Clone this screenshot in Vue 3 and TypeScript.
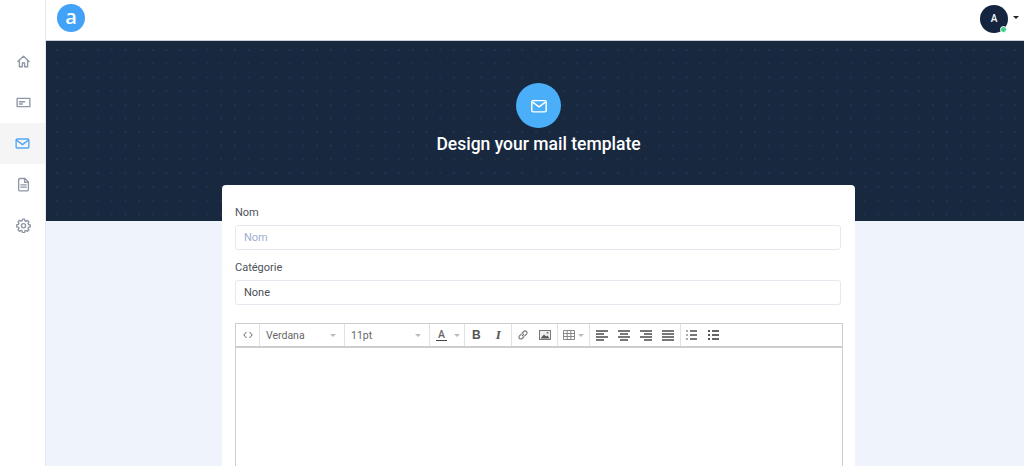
<script setup lang="ts">
const navItems = [
  { id: 'home', paths: ['M2.500 10 10 3l7.500 7', 'M4.500 8.500V17h4v-5h3v5h4V8.500'] },
  { id: 'card', paths: ['M1.500 4.500h17v11h-17z', 'M4.500 9h7', 'M4.500 12h4'] },
  { id: 'mail', paths: ['M3 4h14a1.500 1.500 0 0 1 1.500 1.500v9A1.500 1.500 0 0 1 17 16H3a1.500 1.500 0 0 1-1.500-1.500v-9A1.500 1.500 0 0 1 3 4z', 'M2 5.500 10 11.500l8-6'] },
  { id: 'doc', paths: ['M5 2h7l4.500 4.500V17a1.500 1.500 0 0 1-1.500 1.500H5A1.500 1.500 0 0 1 3.500 17V3.500A1.500 1.500 0 0 1 5 2z', 'M11.500 2.500V7h4.500', 'M6.500 10.500h7', 'M6.500 13.500h7'] },
  { id: 'gear', paths: ['M8.600 1.500h2.800l.4 2.300 1.500.7 2-1.300 2 2-1.300 2 .7 1.500 2.300.4v2.800l-2.300.4-.7 1.500 1.300 2-2 2-2-1.300-1.500.7-.4 2.300H8.600l-.4-2.300-1.500-.7-2 1.300-2-2 1.300-2-.7-1.500-2.300-.4V8.900l2.300-.4.7-1.500-1.300-2 2-2 2 1.300 1.500-.7z', 'M10 7.500a2.800 2.800 0 1 0 0 5.600 2.800 2.800 0 0 0 0-5.600z'] },
]
const aligns = [0, 1, 2, 3]
</script>

<template>
  <div class="page">
    <aside class="sidebar">
      <div class="side-top"></div>
      <div v-for="item in navItems" :key="item.id" class="nav" :class="{ active: item.id === 'mail' }">
        <svg width="15" height="15" viewBox="0 0 20 20" fill="none" stroke="currentColor" stroke-width="1.800" stroke-linejoin="round" stroke-linecap="round">
          <path v-for="p in item.paths" :key="p" :d="p" />
        </svg>
      </div>
    </aside>
    <div class="main">
      <header class="topbar">
        <div class="logo">a</div>
        <div class="user">
          <div class="avatar">A<span class="status"></span></div>
          <span class="caret"></span>
        </div>
      </header>
      <section class="hero">
        <div class="hero-icon">
          <svg width="18" height="18" viewBox="0 0 20 20" fill="none" stroke="#fff" stroke-width="1.600" stroke-linejoin="round">
            <rect x="2" y="4" width="16" height="12.500" rx="1.500" />
            <path d="M2.500 5.500 10 11l7.500-5.500" />
          </svg>
        </div>
        <h1>Design your mail template</h1>
      </section>
      <div class="content">
        <form class="card">
          <label class="label">Nom</label>
          <div class="input placeholder">Nom</div>
          <label class="label second">Catégorie</label>
          <div class="input">None</div>
          <div class="editor">
            <div class="toolbar">
              <div class="cell code">
                <svg width="10" height="8" viewBox="0 0 10 8" fill="none" stroke="#666" stroke-width="1"><path d="M3.500 1 .8 4l2.700 3M6.500 1l2.700 3-2.700 3" /></svg>
              </div>
              <div class="cell select wide"><span>Verdana</span><i class="tri"></i></div>
              <div class="cell select wide"><span>11pt</span><i class="tri"></i></div>
              <div class="cell color"><span class="a">A</span><i class="tri"></i></div>
              <div class="cell fmt">
                <b class="bold">B</b>
                <b class="italic">I</b>
              </div>
              <div class="cell media">
                <svg width="12" height="12" viewBox="0 0 12 12" fill="none" stroke="#777" stroke-width="1.100"><path d="M5 7 7 5M4.800 4.500 6.800 2.500a1.700 1.700 0 0 1 2.700 2.700L7.500 7.200M7.200 7.500 5.200 9.500a1.700 1.700 0 0 1-2.700-2.700L4.500 4.800" /></svg>
                <svg width="12" height="10" viewBox="0 0 12 10"><rect x=".5" y=".5" width="11" height="9" fill="#eee" stroke="#777" /><path d="M1.500 8.500 5 4.500l2 2 1.500-1 2 3z" fill="#555" /><circle cx="8.500" cy="2.800" r="1" fill="#777" /></svg>
              </div>
              <div class="cell table">
                <svg width="12" height="10" viewBox="0 0 12 10" fill="none" stroke="#888"><path d="M.5.500h11v9H.5zM.5 3.500h11M.5 6.500h11M4.200.5v9M7.800.5v9" /></svg>
                <i class="tri"></i>
              </div>
              <div class="cell aligns">
                <span v-for="i in aligns" :key="i" class="al" :class="'al' + i">
                  <i></i><i></i><i></i><i></i>
                </span>
              </div>
              <div class="cell lists">
                <span class="list numbered"><i></i><i></i><i></i></span>
                <span class="list"><i></i><i></i><i></i></span>
              </div>
            </div>
            <div class="editor-body"></div>
          </div>
        </form>
      </div>
    </div>
  </div>
</template>

<style>
html, body { margin: 0; height: 100%; overflow: hidden; background: #fff; }
</style>

<style scoped>
.page {
  display: flex;
  height: 466px;
  overflow: hidden;
  font-family: Roboto, "Liberation Sans", sans-serif;
  color: #4a4f57;
}
.sidebar {
  width: 46px;
  box-sizing: border-box;
  flex: none;
  background: #fff;
  border-right: 1px solid #e6e9f0;
}
.side-top { height: 41px; }
.nav {
  height: 41px;
  margin-right: -1px;
  display: flex;
  align-items: center;
  justify-content: center;
  color: #8d97a5;
}
.nav.active { background: #f5f5f6; color: #57a6f5; margin-right: 0; }
.nav svg { display: block; margin-top: -1px; }
.main { flex: 1; min-width: 0; display: flex; flex-direction: column; background: #eff3fb; }
.topbar {
  height: 41px;
  box-sizing: border-box;
  flex: none;
  background: #fff;
  border-bottom: 1px solid #c9ced6;
  display: flex;
  align-items: center;
  justify-content: space-between;
  padding: 0 0 0 11px;
}
.logo {
  width: 28px;
  height: 28px;
  margin-top: -4px;
  border-radius: 50%;
  background: #42a2f7;
  color: #fff;
  font: 600 20px/25px "Open Sans", sans-serif;
  text-align: center;
}
.user { display: flex; align-items: center; margin-right: 5px; margin-top: -3px; }
.avatar {
  position: relative;
  width: 28px;
  height: 28px;
  border-radius: 50%;
  background: #15253f;
  color: #fff;
  font-size: 10px;
  font-weight: 500;
  line-height: 28px;
  text-align: center;
}
.status {
  position: absolute;
  right: 1px;
  bottom: 0;
  width: 5px;
  height: 5px;
  border-radius: 50%;
  background: #3ecf8e;
  border: 1px solid #fff;
}
.caret {
  width: 0;
  height: 0;
  margin-left: 5px;
  margin-bottom: 3px;
  border-left: 3.500px solid transparent;
  border-right: 3.500px solid transparent;
  border-top: 3.500px solid #222;
}
.hero {
  height: 180px;
  flex: none;
  box-sizing: border-box;
  padding: 42px 0 0 7px;
  background-color: #17283f;
  background-image: radial-gradient(circle at 1px 1px, #22334c 0.8px, transparent 1.200px);
  background-size: 13.700px 13.700px;
  background-position: 10px 8px;
  display: flex;
  flex-direction: column;
  align-items: center;
}
.hero-icon {
  width: 45px;
  height: 45px;
  border-radius: 50%;
  background: #4aaef8;
  display: flex;
  align-items: center;
  justify-content: center;
}
.hero h1 {
  margin: 1px 0 0;
  font-size: 17.500px;
  line-height: 30px;
  font-weight: 500;
  color: #fff;
}
.content { flex: 1; display: flex; padding-left: 176px; }
.card {
  width: 633px;
  flex: none;
  box-sizing: border-box;
  margin-top: -36px;
  height: 320px;
  padding: 21px 14px 0 13px;
  background: #fff;
  border-radius: 4px 4px 0 0;
}
.label {
  display: block;
  font-size: 11px;
  line-height: 14px;
  color: #4d5259;
}
.label.second { margin-top: 11px; }
.input {
  box-sizing: border-box;
  height: 25px;
  margin-top: 5px;
  width: 606px;
  padding: 0 8px;
  border: 1px solid #e4e8ef;
  border-radius: 3px;
  font-size: 11px;
  line-height: 23px;
  color: #4a4f57;
}
.input.placeholder { color: #9db0cf; }
.editor {
  width: 608px;
  box-sizing: border-box;
  margin-top: 18px;
  border: 1px solid #cdcdcd;
  border-bottom: none;
  height: 200px;
}
.toolbar {
  display: flex;
  height: 24px;
  box-sizing: border-box;
  border-bottom: 2px solid #cdcdcd;
  font-size: 10.500px;
  color: #666;
}
.cell {
  height: 100%;
  box-sizing: border-box;
  border-right: 1px solid #e2e2e2;
  display: flex;
  align-items: center;
}
.code { width: 24px; justify-content: center; }
.select.wide { width: 85px; padding: 0 8px 0 6px; justify-content: space-between; }
.tri {
  display: block;
  width: 0;
  height: 0;
  border-left: 3px solid transparent;
  border-right: 3px solid transparent;
  border-top: 3px solid #bbb;
}
.color { width: 35px; padding-left: 6px; gap: 7px; }
.a { border-bottom: 1.500px solid #444; line-height: 11px; width: 11px; text-align: center; font-weight: 500; }
.fmt { width: 47px; padding-left: 7px; gap: 15px; font-size: 12px; color: #555; }
.bold { font-family: "Liberation Sans", sans-serif; font-weight: 700; }
.italic { font-family: "Liberation Serif", serif; font-style: italic; font-size: 13px; }
.media { width: 46px; padding-left: 5px; gap: 10px; }
.table { width: 32px; padding-left: 5px; gap: 3px; }
.aligns { width: 91px; padding-left: 6px; gap: 10px; }
.al { display: flex; flex-direction: column; gap: 1px; width: 12px; }
.al i { display: block; height: 2px; background: #777; width: 12px; }
.al0 i:nth-child(even) { width: 8px; }
.al1 { align-items: center; }
.al1 i:nth-child(even) { width: 8px; }
.al2 { align-items: flex-end; }
.al2 i:nth-child(even) { width: 8px; }
.lists { padding-left: 5px; gap: 11px; border-right: none; }
.list { display: flex; flex-direction: column; gap: 2.500px; width: 11px; }
.list i { display: block; height: 1.500px; width: 11px; background: linear-gradient(90deg, #555 2px, transparent 2px, transparent 4px, #666 4px); }
.list.numbered i { background: linear-gradient(90deg, #aaa 2px, transparent 2px, transparent 4px, #777 4px); }
.editor-body { height: 176px; background: #fff; }
</style>
